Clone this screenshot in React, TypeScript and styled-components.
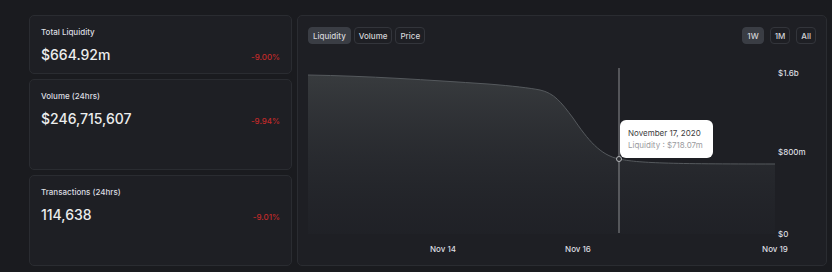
import React from "react";
import styled, { createGlobalStyle } from "styled-components";

const Global = createGlobalStyle`
  html, body { margin: 0; padding: 0; background: #1a1b1f; }
  body { font-family: Inter, "Noto Sans", sans-serif; color: #e4e5e7; }
`;

const Page = styled.div`
  display: grid;
  grid-template-columns: 263px 530px;
  gap: 5px;
  padding: 15px 5px 6px 29px;
  height: 272px;
  box-sizing: border-box;
`;

const Column = styled.div`
  display: grid;
  grid-template-rows: 59px 91px 91px;
  gap: 5px;
`;

const Card = styled.div`
  background: #1e1f24;
  border: 1px solid #2a2c31;
  border-radius: 5px;
  padding: 11px 11px 0 11px;
  box-sizing: border-box;
`;

const Title = styled.div`
  font-size: 8px;
  font-weight: 500;
  color: #dcdde0;
  line-height: 10px;
`;

const ValueRow = styled.div`
  display: flex;
  justify-content: space-between;
  align-items: flex-end;
  margin-top: 10px;
`;

const Value = styled.div`
  font-size: 14px;
  font-weight: 500;
  color: #eceded;
  line-height: 16px;
`;

const Change = styled.div`
  font-size: 8px;
  font-weight: 500;
  color: #c22a2a;
  line-height: 10px;
  margin-bottom: 1px;
`;

const Panel = styled.div`
  background: #1e1f24;
  border: 1px solid #2a2c31;
  border-radius: 5px;
  padding: 11px 10px 0 10px;
  box-sizing: border-box;
  display: flex;
  flex-direction: column;
`;

const Toolbar = styled.div`
  display: flex;
  justify-content: space-between;
`;

const Group = styled.div<{ $gap: number }>`
  display: flex;
  gap: ${(p) => p.$gap}px;
`;

const Btn = styled.div<{ $active?: boolean }>`
  height: 17px;
  box-sizing: border-box;
  padding: 0 4px;
  display: flex;
  align-items: center;
  font-size: 8px;
  font-weight: 500;
  color: #d4d5d8;
  border-radius: 4px;
  background: ${(p) => (p.$active ? "#3a3d44" : "transparent")};
  border: 1px solid ${(p) => (p.$active ? "#3a3d44" : "#33353b")};
`;

const ChartWrap = styled.div`
  position: relative;
  margin-top: 16px;
  width: 512px;
  height: 200px;
`;

const Tooltip = styled.div`
  position: absolute;
  left: 312px;
  top: 60px;
  width: 93px;
  height: 38px;
  box-sizing: border-box;
  background: #ffffff;
  border-radius: 6px;
  padding: 7px 8px;
  font-size: 8px;
  line-height: 12px;
`;

const TipDate = styled.div`
  color: #3c3d40;
`;

const TipValue = styled.div`
  color: #9a9b9e;
`;

const stats = [
  { title: "Total Liquidity", value: "$664.92m", change: "-9.00%" },
  { title: "Volume (24hrs)", value: "$246,715,607", change: "-9.94%" },
  { title: "Transactions (24hrs)", value: "114,638", change: "-9.01%" },
];

const linePath =
  "M0,15 C60,16 120,20 180,24 C205,26 222,28 232,30 C246,33 253,42 265,58 C280,80 292,95 311,99 C330,103 360,104 467,104";

export default function App() {
  return (
    <>
      <Global />
      <Page>
        <Column>
          {stats.map((s) => (
            <Card key={s.title}>
              <Title>{s.title}</Title>
              <ValueRow>
                <Value>{s.value}</Value>
                <Change>{s.change}</Change>
              </ValueRow>
            </Card>
          ))}
        </Column>
        <Panel>
          <Toolbar>
            <Group $gap={3}>
              <Btn $active>Liquidity</Btn>
              <Btn>Volume</Btn>
              <Btn>Price</Btn>
            </Group>
            <Group $gap={6}>
              <Btn $active>1W</Btn>
              <Btn>1M</Btn>
              <Btn>All</Btn>
            </Group>
          </Toolbar>
          <ChartWrap>
            <svg width="512" height="200" viewBox="0 0 512 200">
              <defs>
                <linearGradient id="fillGrad" x1="0" y1="0" x2="0" y2="1">
                  <stop offset="0" stopColor="#383b3e" stopOpacity="1" />
                  <stop offset="1" stopColor="#22242a" stopOpacity="0.4" />
                </linearGradient>
              </defs>
              <path d={`${linePath} L467,174 L0,174 Z`} fill="url(#fillGrad)" />
              <path d={linePath} fill="none" stroke="#55595d" strokeWidth="1" />
              <line x1="311" y1="8" x2="311" y2="173" stroke="#8a8c8f" strokeWidth="1" />
              <circle cx="311" cy="99" r="2.5" fill="#2a2c30" stroke="#b8babd" strokeWidth="1" />
              <g fontFamily="Inter, sans-serif" fontSize="8" fontWeight="500" fill="#dcdde0">
                <text x="470" y="16">$1.6b</text>
                <text x="470" y="95">$800m</text>
                <text x="470" y="177">$0</text>
                <text x="135" y="192" textAnchor="middle">Nov 14</text>
                <text x="270" y="192" textAnchor="middle">Nov 16</text>
                <text x="467" y="192" textAnchor="middle">Nov 19</text>
              </g>
            </svg>
            <Tooltip>
              <TipDate>November 17, 2020</TipDate>
              <TipValue>Liquidity : $718.07m</TipValue>
            </Tooltip>
          </ChartWrap>
        </Panel>
      </Page>
    </>
  );
}
